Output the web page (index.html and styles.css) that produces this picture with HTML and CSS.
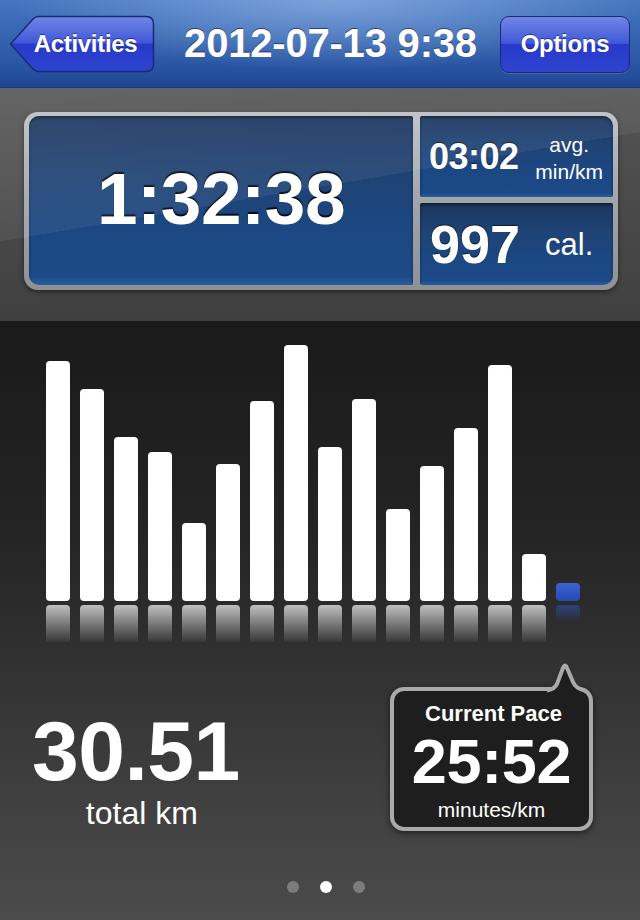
FILE: index.html
```html
<!DOCTYPE html>
<html lang="en">
<head>
    <meta charset="UTF-8">
    <meta name="viewport" content="width=device-width, initial-scale=1.0">
    <title>Activity 2012-07-13</title>
    <link rel="stylesheet" href="styles.css">
</head>
<body>
    <div class="navbar">
        <button class="nav-btn back-btn">
            <svg class="back-shape" viewBox="0 0 146 58" width="146" height="58">
                <defs>
                    <linearGradient id="btnFill" x1="0" y1="0" x2="0" y2="1">
                        <stop offset="0" stop-color="#7186e6"/>
                        <stop offset="0.48" stop-color="#4058d8"/>
                        <stop offset="0.5" stop-color="#2839c9"/>
                        <stop offset="1" stop-color="#2e44d0"/>
                    </linearGradient>
                </defs>
                <path d="M1.5 29 L24 4 Q26.5 1.5 30 1.5 H137 Q144.5 1.5 144.5 9 V49 Q144.5 56.5 137 56.5 H30 Q26.5 56.5 24 54 Z" fill="url(#btnFill)" stroke="#1a2a78" stroke-width="1.5"/>
            </svg>
            <span>Activities</span>
        </button>
        <h1 class="title">2012-07-13 9:38</h1>
        <button class="nav-btn options-btn"><span>Options</span></button>
    </div>

    <div class="summary">
        <div class="panel">
            <div class="cell cell-time">1:32:38</div>
            <div class="cell cell-pace">
                <span class="pace-value">03:02</span>
                <span class="pace-unit">avg.<br>min/km</span>
            </div>
            <div class="cell cell-cal">
                <span class="cal-value">997</span>
                <span class="cal-unit">cal.</span>
            </div>
        </div>
    </div>

    <div class="stats">
        <div class="chart">
            <div class="col"><div class="bar" style="height:240px"></div><div class="reflection"></div></div>
            <div class="col"><div class="bar" style="height:212px"></div><div class="reflection"></div></div>
            <div class="col"><div class="bar" style="height:164px"></div><div class="reflection"></div></div>
            <div class="col"><div class="bar" style="height:149px"></div><div class="reflection"></div></div>
            <div class="col"><div class="bar" style="height:78px"></div><div class="reflection"></div></div>
            <div class="col"><div class="bar" style="height:137px"></div><div class="reflection"></div></div>
            <div class="col"><div class="bar" style="height:200px"></div><div class="reflection"></div></div>
            <div class="col"><div class="bar" style="height:256px"></div><div class="reflection"></div></div>
            <div class="col"><div class="bar" style="height:154px"></div><div class="reflection"></div></div>
            <div class="col"><div class="bar" style="height:202px"></div><div class="reflection"></div></div>
            <div class="col"><div class="bar" style="height:92px"></div><div class="reflection"></div></div>
            <div class="col"><div class="bar" style="height:135px"></div><div class="reflection"></div></div>
            <div class="col"><div class="bar" style="height:173px"></div><div class="reflection"></div></div>
            <div class="col"><div class="bar" style="height:236px"></div><div class="reflection"></div></div>
            <div class="col"><div class="bar" style="height:47px"></div><div class="reflection"></div></div>
            <div class="col current"><div class="bar" style="height:18px"></div><div class="reflection"></div></div>
        </div>

        <div class="totals">
            <div class="distance">
                <div class="distance-value">30.51</div>
                <div class="distance-unit">total km</div>
            </div>
            <div class="bubble">
                <svg class="bubble-tail" viewBox="0 0 42 32" width="42" height="32">
                    <path d="M6 31 V27 Q11 26 13 21 L19 5 Q21 0 23 5 L29 19 Q32 26 38 27 V31 Z" fill="#1e1e1e"/>
                    <path d="M3 27.5 Q11 26 13 21 L19 5 Q21 0 23 5 L29 19 Q32 26 41 27.5" fill="none" stroke="#a9a9a9" stroke-width="4" stroke-linejoin="round"/>
                </svg>
                <div class="bubble-label">Current Pace</div>
                <div class="bubble-value">25:52</div>
                <div class="bubble-unit">minutes/km</div>
            </div>
        </div>

        <div class="dots">
            <span class="dot"></span>
            <span class="dot active"></span>
            <span class="dot"></span>
        </div>
    </div>
</body>
</html>
```

FILE: styles.css
```css
body {
    margin: 0;
    width: 640px;
    height: 920px;
    overflow: hidden;
    font-family: 'Liberation Sans', Arial, Helvetica, sans-serif;
    color: white;
    background: #3a3a3a;
}

/* top bar */
.navbar {
    height: 88px;
    display: flex;
    align-items: center;
    justify-content: space-between;
    padding: 0 10px 0 9px;
    box-sizing: border-box;
    background:
        radial-gradient(ellipse 320px 70px at 52% 0, rgba(170,200,245,0.55), rgba(170,200,245,0) 100%),
        linear-gradient(#4676bf 0%, #3463ae 45%, #2a55a3 75%, #1f4695 100%);
    border-bottom: 1px solid #1a3578;
}

.nav-btn {
    position: relative;
    border: none;
    padding: 0;
    margin: 0;
    background: none;
    font-family: inherit;
    font-size: 24px;
    font-weight: 700;
    color: white;
    text-shadow: 0 -1px 0 rgba(0,0,0,0.45);
    letter-spacing: -0.3px;
}

.back-btn {
    width: 146px;
    height: 58px;
    margin-top: 1px;
}

.back-shape {
    position: absolute;
    left: 0;
    top: 0;
}

.back-btn span {
    position: relative;
    padding-left: 7px;
}

.options-btn {
    width: 130px;
    height: 57px;
    margin-top: 1px;
    border: 1.5px solid #1a2a78;
    border-radius: 9px;
    background: linear-gradient(#7186e6 0%, #4058d8 48%, #2839c9 50%, #2e44d0 100%);
    box-shadow: 0 1px 0 rgba(255,255,255,0.15);
}

.title {
    margin: 0 0 0 6px;
    font-size: 40px;
    font-weight: 700;
    letter-spacing: -0.2px;
    text-shadow: 0 -1px 0 rgba(0,0,0,0.5);
}

/* summary panel */
.summary {
    position: relative;
    height: 233px;
    padding: 24px 22px 0 24px;
    box-sizing: border-box;
    background: linear-gradient(#555 0%, #4a4a4a 50%, #404040 100%);
    overflow: hidden;
}

.summary::after {
    content: '';
    position: absolute;
    inset: 0;
    pointer-events: none;
    background: linear-gradient(170.3deg, rgba(255,255,255,0.09) 0%, rgba(255,255,255,0.06) 44.8%, rgba(255,255,255,0) 44.8%);
}

.panel {
    display: grid;
    grid-template-columns: 384px 193px;
    grid-template-rows: 81px 82px;
    gap: 6px 7px;
    padding: 4px 5px 5px 5px;
    border-radius: 14px;
    background: linear-gradient(#bcc0c4 0%, #a2a6ab 50%, #8d9196 100%);
    box-shadow: 0 2px 5px rgba(0,0,0,0.45);
}

.cell {
    display: flex;
    align-items: center;
    background: linear-gradient(#1d3660 0%, #1f4374 35%, #1c4782 65%, #1c4a88 95%, #2c5f9f 100%);
    box-shadow: inset 0 2px 3px rgba(0,0,0,0.5);
}

.cell-time {
    grid-row: 1 / 3;
    justify-content: center;
    padding-bottom: 4px;
    border-radius: 10px 2px 2px 10px;
    font-size: 73px;
    font-weight: 700;
    letter-spacing: -0.5px;
    text-shadow: 0 -2px 1px rgba(0,0,0,0.85);
}

.cell-pace {
    justify-content: space-between;
    padding: 0 10px 0 9px;
    border-radius: 2px 10px 2px 2px;
}

.pace-value {
    font-size: 36px;
    font-weight: 700;
    letter-spacing: -0.5px;
    text-shadow: 0 -1px 1px rgba(0,0,0,0.6);
}

.pace-unit {
    font-size: 21px;
    line-height: 27px;
    text-align: center;
    padding-top: 2px;
}

.cell-cal {
    gap: 25px;
    padding: 0 0 0 10px;
    border-radius: 2px 2px 10px 2px;
}

.cal-value {
    font-size: 54px;
    font-weight: 700;
    line-height: 1;
    text-shadow: 0 -1px 1px rgba(0,0,0,0.6);
}

.cal-unit {
    font-size: 31px;
    line-height: 1;
}

/* chart + totals */
.stats {
    height: 599px;
    background: linear-gradient(#1a1a1a 0%, #242424 35%, #333 60%, #404040 80%, #4b4b4b 100%);
}

.chart {
    display: flex;
    align-items: flex-end;
    gap: 10px;
    height: 321px;
    padding-left: 46px;
}

.col {
    display: flex;
    flex-direction: column;
    width: 24px;
}

.bar {
    background: white;
    border-radius: 4px;
}

.reflection {
    height: 37px;
    margin-top: 4px;
    border-radius: 4px 4px 0 0;
    background: linear-gradient(rgba(255,255,255,0.7), rgba(255,255,255,0.04));
}

.current .bar {
    background: linear-gradient(#3b63cf, #2649b4);
}

.current .reflection {
    background: linear-gradient(rgba(48,80,180,0.6), rgba(48,80,180,0) 45%);
}

.totals {
    display: flex;
    justify-content: space-between;
    align-items: flex-start;
    margin-top: 45px;
    padding: 0 47px 0 32px;
}

.distance {
    margin-top: 22px;
    text-align: center;
}

.distance-value {
    font-size: 84px;
    line-height: 84px;
    font-weight: 700;
    letter-spacing: -0.5px;
}

.distance-unit {
    margin-top: 3px;
    padding-left: 12px;
    font-size: 32px;
    line-height: 34px;
}

.bubble {
    position: relative;
    width: 203px;
    box-sizing: border-box;
    padding: 11px 0 6px;
    border: 4px solid #a9a9a9;
    border-radius: 14px;
    background: #1e1e1e;
    box-shadow: 0 2px 6px rgba(0,0,0,0.55);
    text-align: center;
}

.bubble-tail {
    position: absolute;
    left: 150px;
    top: -28px;
}

.bubble-label {
    font-size: 22px;
    line-height: 24px;
    font-weight: 700;
    padding-left: 4px;
}

.bubble-value {
    margin-top: 6px;
    font-size: 63px;
    line-height: 58px;
    font-weight: 700;
    letter-spacing: -0.3px;
}

.bubble-unit {
    margin-top: 9px;
    font-size: 21px;
    line-height: 22px;
}

.dots {
    display: flex;
    justify-content: center;
    gap: 21px;
    margin-top: 50px;
    padding-left: 12px;
}

.dot {
    width: 12px;
    height: 12px;
    border-radius: 50%;
    background: #7c7c7c;
}

.dot.active {
    background: white;
}
```
